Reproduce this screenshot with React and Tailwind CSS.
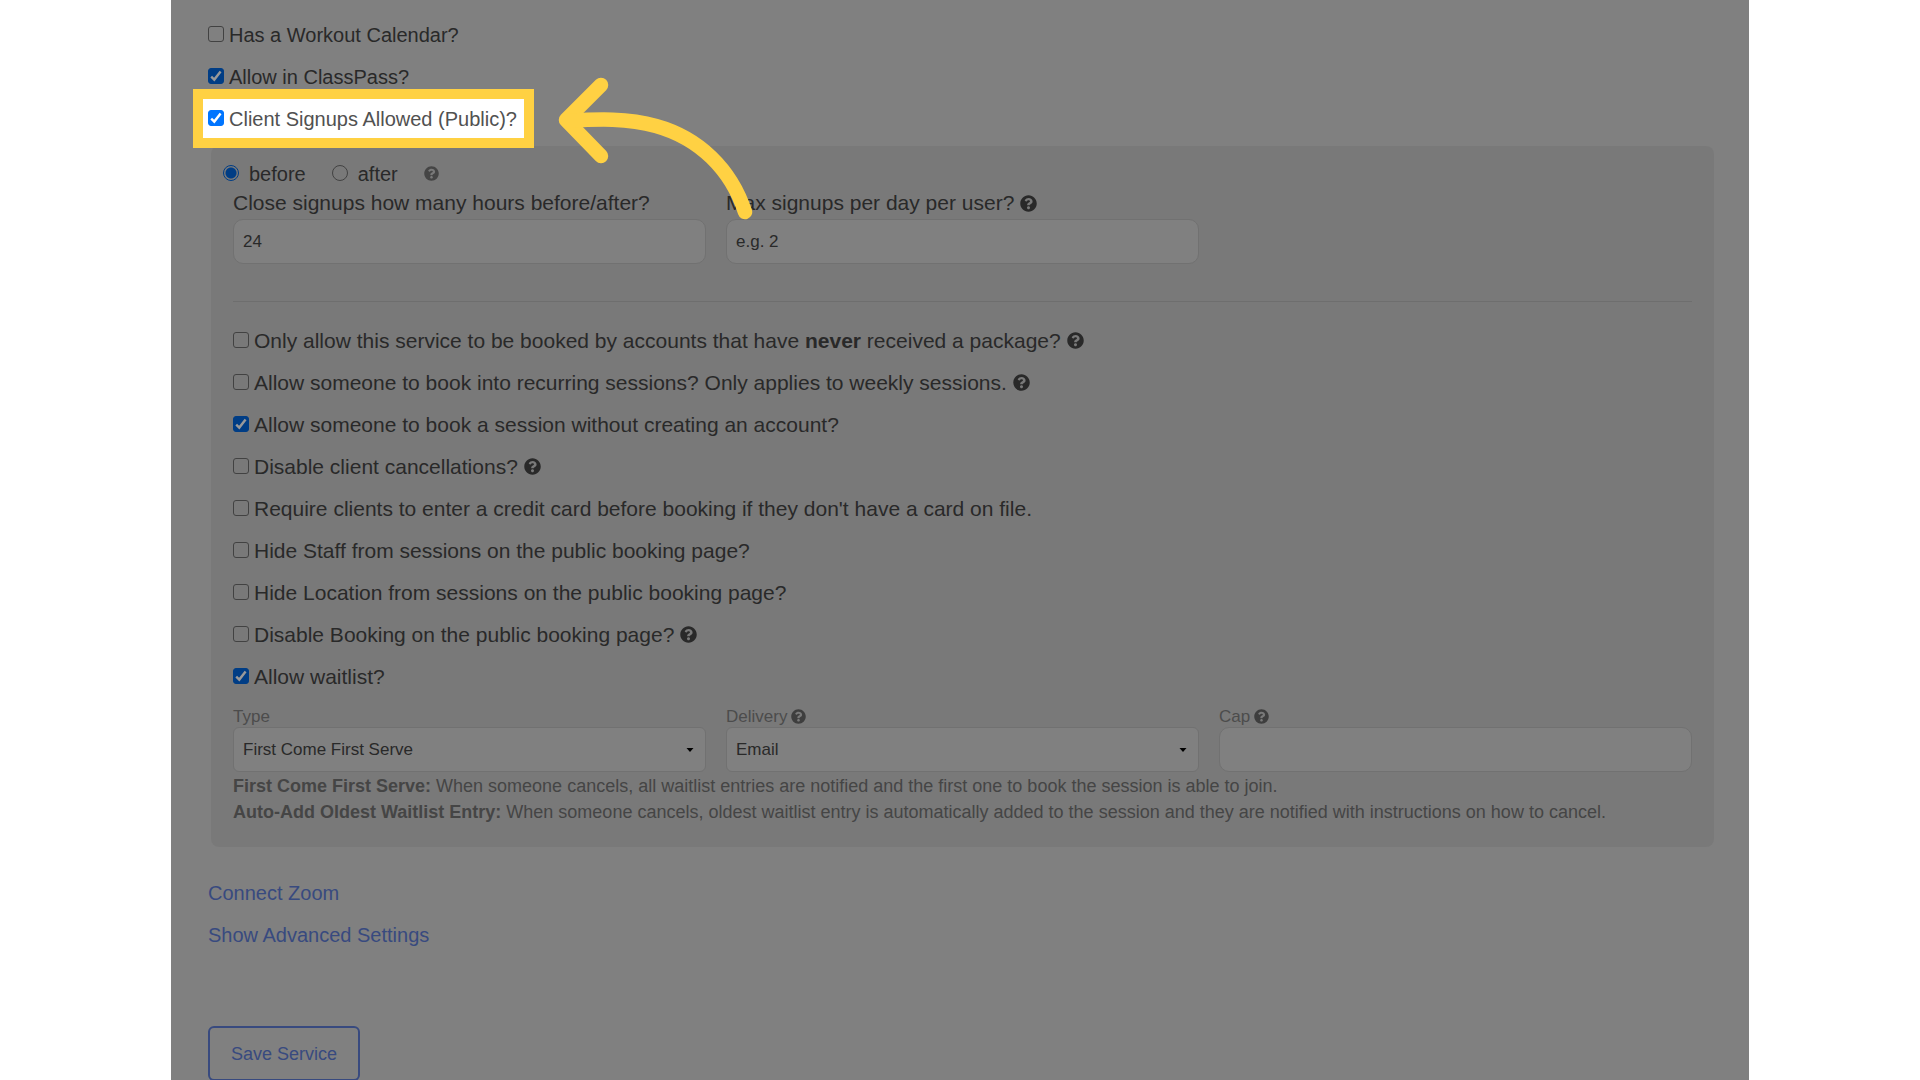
import React from "react";
import { FaQuestionCircle } from "react-icons/fa";

function Check({ id, on, lit }) {
  return (
    <span className="grid size-4 shrink-0">
      <input
        id={id}
        type="checkbox"
        defaultChecked={on}
        className={
          "peer col-start-1 row-start-1 size-4 appearance-none rounded-[3px] border border-[#424242] " +
          (lit ? "checked:border-[#0075ff] checked:bg-[#0075ff]" : "checked:border-[#003d85] checked:bg-[#003d85]")
        }
      />
      <svg
        viewBox="0 0 16 16"
        className={
          "pointer-events-none invisible col-start-1 row-start-1 size-4 peer-checked:visible " +
          (lit ? "text-white" : "text-[#999999]")
        }
        fill="none"
        stroke="currentColor"
        strokeWidth="2.4"
      >
        <path d="M3.2 8.6 6.3 11.6 12.6 3.6" />
      </svg>
    </span>
  );
}

function Help({ className = "" }) {
  return <FaQuestionCircle aria-label="Help" role="img" className={"shrink-0 " + className} />;
}

function Row({ id, on, help, children }) {
  return (
    <div className="flex h-[42px] items-center">
      <Check id={id} on={on} />
      <label htmlFor={id} className="pt-0.5 pl-[5px]">
        {children}
      </label>
      {help && <Help className="ml-1.5 size-[17px]" />}
    </div>
  );
}

function Radio({ id, on, children }) {
  return (
    <div className="flex items-center">
      <input
        id={id}
        name="close-when"
        type="radio"
        defaultChecked={on}
        className="size-4 appearance-none rounded-full border border-[#424242] checked:border-[#003d85] checked:bg-[radial-gradient(circle,#003d85_5px,transparent_6px)]"
      />
      <label htmlFor={id} className="pt-0.5 pl-2.5">
        {children}
      </label>
    </div>
  );
}

const box = "h-[45px] w-full border border-[#717171] bg-[#808080] px-[9px] text-[17px] text-[#292929] placeholder:text-[#292929]";

function Select({ id, options }) {
  return (
    <div className="grid">
      <select id={id} className={box + " col-start-1 row-start-1 appearance-none rounded-md"}>
        {options.map((o) => (
          <option key={o}>{o}</option>
        ))}
      </select>
      <svg viewBox="0 0 8 4" className="pointer-events-none col-start-1 row-start-1 mr-3 h-1 w-2 self-center justify-self-end">
        <path d="M0.5 0h7L4 4z" fill="#000" />
      </svg>
    </div>
  );
}

const bookingOptions = [
  {
    id: "never",
    text: (
      <>
        Only allow this service to be booked by accounts that have <b>never</b> received a package?
      </>
    ),
    help: true,
  },
  { id: "recurring", text: "Allow someone to book into recurring sessions? Only applies to weekly sessions.", help: true },
  { id: "guest", text: "Allow someone to book a session without creating an account?", on: true },
  { id: "cancel", text: "Disable client cancellations?", help: true },
  { id: "card", text: "Require clients to enter a credit card before booking if they don't have a card on file." },
  { id: "staff", text: "Hide Staff from sessions on the public booking page?" },
  { id: "location", text: "Hide Location from sessions on the public booking page?" },
  { id: "booking", text: "Disable Booking on the public booking page?", help: true },
  { id: "waitlist", text: "Allow waitlist?", on: true },
];

export default function App() {
  return (
    <div className="h-screen overflow-hidden bg-white px-[171px] font-['Liberation_Sans',Arial,sans-serif] text-[20px] leading-6 text-[#292929]">
      <main className="min-h-full bg-[#808080] pt-[13px] pr-[35px] pl-[37px]">
        <form onSubmit={(e) => e.preventDefault()}>
          <Row id="workout">Has a Workout Calendar?</Row>
          <Row id="classpass" on>
            Allow in ClassPass?
          </Row>
          <div className="relative z-10 flex h-[42px] items-center">
            <div className="-ml-[5px] flex h-[39px] items-center bg-white pr-[7px] pl-[5px] text-[#515151] outline-[10px] outline-[#ffd143] outline-solid">
              <Check id="signups" on lit />
              <label htmlFor="signups" className="pt-0.5 pl-[5px]">
                Client Signups Allowed (Public)?
              </label>
            </div>
            <svg
              viewBox="0 0 200 150"
              className="pointer-events-none absolute top-[-24px] left-[345px] h-[150px] w-[200px]"
              fill="none"
              stroke="#ffd143"
              strokeWidth="14.5"
              strokeLinecap="round"
              strokeLinejoin="round"
              aria-hidden="true"
            >
              <path d="M48 12 13 47 48 83" />
              <path d="M15 48C45 46 75 45 103 53 146 65 178 96 192 139" />
            </svg>
          </div>

          <section className="mt-[7px] ml-[3px] rounded-lg bg-[#797979] px-[22px] pt-[15px] pb-[22px] text-[21px]">
            <div className="-ml-2.5 flex h-6 items-center text-[20px]">
              <Radio id="before" on>
                before
              </Radio>
              <div className="ml-[26px]">
                <Radio id="after">after</Radio>
              </div>
              <Help className="ml-[26px] size-[15px] text-[#454545]" />
            </div>
            <div className="grid grid-cols-3 gap-5">
              <div>
                <label htmlFor="hours" className="flex h-[34px] items-center pt-0.5">
                  Close signups how many hours before/after?
                </label>
                <input id="hours" type="text" defaultValue="24" className={box + " rounded-[10px]"} />
              </div>
              <div>
                <div className="flex h-[34px] items-center pt-0.5">
                  <label htmlFor="max">Max signups per day per user?</label>
                  <Help className="ml-1.5 size-[17px]" />
                </div>
                <input id="max" type="text" placeholder="e.g. 2" className={box + " rounded-[10px]"} />
              </div>
            </div>
            <hr className="mt-[37px] mb-[17px] border-[#6e6e6e]" />
            {bookingOptions.map((o) => (
              <Row key={o.id} id={o.id} on={o.on} help={o.help}>
                {o.text}
              </Row>
            ))}
            <div className="mt-[9px] grid grid-cols-3 gap-5">
              <div>
                <label htmlFor="type" className="flex h-[21px] items-center text-[17px] text-[#4c4c4c]">
                  Type
                </label>
                <Select id="type" options={["First Come First Serve", "Auto-Add Oldest Waitlist Entry"]} />
              </div>
              <div>
                <div className="flex h-[21px] items-center text-[17px] text-[#4c4c4c]">
                  <label htmlFor="delivery">Delivery</label>
                  <Help className="ml-1 size-[15px] text-[#3e3e3e]" />
                </div>
                <Select id="delivery" options={["Email", "Text"]} />
              </div>
              <div>
                <div className="flex h-[21px] items-center text-[17px] text-[#4c4c4c]">
                  <label htmlFor="cap">Cap</label>
                  <Help className="ml-1 size-[15px] text-[#3e3e3e]" />
                </div>
                <input id="cap" type="text" className={box + " rounded-[10px]"} />
              </div>
            </div>
            <p className="mt-px text-[18px] leading-[26px] text-[#454545]">
              <b>First Come First Serve:</b> When someone cancels, all waitlist entries are notified and the first one to book the
              session is able to join.
              <br />
              <b>Auto-Add Oldest Waitlist Entry:</b> When someone cancels, oldest waitlist entry is automatically added to the
              session and they are notified with instructions on how to cancel.
            </p>
          </section>

          <div className="mt-[25px] flex flex-col items-start text-[#384a7f]">
            <a href="#zoom" className="flex h-[42px] items-center">
              Connect Zoom
            </a>
            <a href="#advanced" className="flex h-[42px] items-center">
              Show Advanced Settings
            </a>
            <button type="submit" className="mt-[70px] h-[55px] rounded-md border-2 border-[#384a7f] px-[21px] text-[18px]">
              Save Service
            </button>
          </div>
        </form>
      </main>
    </div>
  );
}
